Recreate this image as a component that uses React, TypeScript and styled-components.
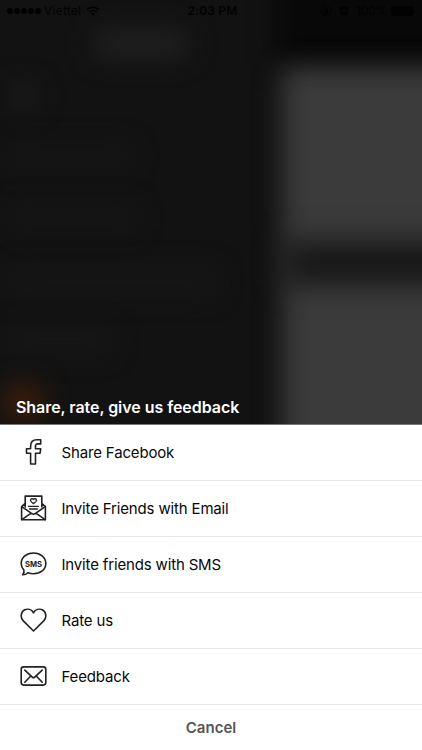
import React from "react";
import styled, { createGlobalStyle } from "styled-components";

const GlobalStyle = createGlobalStyle`
  * { box-sizing: border-box; }
  body { margin: 0; background: #121212; font-family: Inter, "Liberation Sans", sans-serif; }
  button { font-family: inherit; }
`;

const Screen = styled.main`
  position: relative;
  display: flex;
  flex-direction: column;
  width: 422px;
  height: 750px;
  overflow: hidden;
  background: #121212;
`;

const Backdrop = styled.div`
  position: absolute;
  inset: 0 0 326px;
  overflow: hidden;
`;

const Glow = styled.div<{ $x: number; $y: number; $w: number; $h: number; $color: string; $blur?: number }>`
  position: absolute;
  left: ${(p) => p.$x}px;
  top: ${(p) => p.$y}px;
  width: ${(p) => p.$w}px;
  height: ${(p) => p.$h}px;
  background: ${(p) => p.$color};
  filter: blur(${(p) => p.$blur ?? 13}px);
`;

const StatusBar = styled.header`
  position: relative;
  display: grid;
  grid-template-columns: 1fr auto 1fr;
  align-items: center;
  height: 22px;
  padding: 0 6px 0 7px;
  color: #020202;
  font-size: 12px;
  line-height: 22px;
`;

const StatusGroup = styled.div<{ $end?: boolean }>`
  display: flex;
  align-items: center;
  justify-content: ${(p) => (p.$end ? "flex-end" : "flex-start")};
`;

const Signal = styled.div`
  display: flex;
  gap: 1px;
  margin-right: 3px;
`;

const Dot = styled.span`
  width: 6px;
  height: 6px;
  border-radius: 50%;
  background: currentColor;
`;

const Carrier = styled.span`
  margin-right: 5px;
  letter-spacing: 0.25px;
`;

const Clock = styled.span`
  padding-left: 2px;
  font-weight: 600;
  letter-spacing: 0.2px;
`;

const Indicators = styled.div`
  display: flex;
  align-items: center;
  gap: 7px;
`;

const Percent = styled.span`
  margin: 0 4px 0 7px;
  letter-spacing: -0.25px;
`;

const Title = styled.h1`
  position: relative;
  margin: auto 0 0;
  padding: 0 16px;
  height: 28px;
  color: #fff;
  font-size: 16px;
  font-weight: 600;
  line-height: 23px;
  letter-spacing: -0.05px;
  white-space: nowrap;
`;

const Sheet = styled.section`
  position: relative;
  display: flex;
  flex-direction: column;
  height: 326px;
  background: #fff;
  border-top: 1px solid #777;
`;

const Action = styled.button`
  display: flex;
  align-items: center;
  height: 56px;
  padding: 0 20px;
  border: 0;
  border-bottom: 1px solid #e8e8e8;
  background: #fff;
  color: #080808;
  font-size: 15px;
  text-align: left;
`;

const Label = styled.span`
  margin-left: 14.5px;
  letter-spacing: -0.16px;
  white-space: nowrap;
`;

const Cancel = styled.button`
  flex: 1;
  padding: 0 0 1px;
  border: 0;
  background: #fff;
  color: #555;
  font-size: 15px;
  font-weight: 600;
`;

const Icon = styled.svg`
  width: 27px;
  height: 28px;
  margin-bottom: 2px;
  flex: none;
  fill: none;
  stroke: #222;
  stroke-width: 1.6;
  stroke-linecap: round;
  stroke-linejoin: round;
`;

const SmsText = styled.text`
  fill: #222;
  stroke: none;
  font: 700 7.6px Inter, sans-serif;
`;

const FacebookIcon = () => (
  <Icon viewBox="0 0 27 28">
    <path d="M10.6 26V15.2H6.5v-4.4h4.1V8.4c0-4.3 2.2-6.6 6.2-6.6h3.9v4.1h-2.9c-1.7 0-2.3.8-2.3 2.3v2.6h5.2l-.6 4.4h-4.6V26z" />
  </Icon>
);

const InviteIcon = () => (
  <Icon viewBox="0 0 27 28">
    <path d="M5.2 13V2.1h16.6V13M5.2 9.4 1.6 12.5v13.3h23.8V12.5l-3.6-3.1" />
    <path d="m1.8 12.7 9.4 6.4 2.3 1.3 2.3-1.3 9.4-6.4M1.8 25.6l9.4-6.5M25.2 25.6l-9.4-6.5" />
    <path strokeWidth="1.3" d="M13.5 9.6c-2.1-1.4-3-2.3-3-3.4 0-1.7 2.2-2 3-.6.8-1.4 3-1.1 3 .6 0 1.1-.9 2-3 3.4zM8.5 12.3h10M9.5 15h8" />
  </Icon>
);

const SmsIcon = () => (
  <Icon viewBox="0 0 27 28">
    <path d="M3.9 20.1C2.2 18.3 1.2 16 1.2 13.4 1.2 7.1 6.7 3 13.5 3s12.3 4.1 12.3 10.4-5.5 10.4-12.3 10.4c-2 0-3.9-.4-5.6-1.1-1.5 1.5-3.2 2.2-5.3 2.1 1.4-1.4 1.8-2.7 1.3-4.7z" />
    <SmsText x="13.5" y="16.5" textAnchor="middle">SMS</SmsText>
  </Icon>
);

const HeartIcon = () => (
  <Icon viewBox="0 0 27 28">
    <path d="M13.5 25 3.3 14.9C-.1 11.5.8 5.7 4.7 3.8c3.2-1.4 6.9-.3 8.8 3 1.9-3.3 5.6-4.4 8.8-3 3.9 1.9 4.8 7.7 1.4 11.1z" />
  </Icon>
);

const FeedbackIcon = () => (
  <Icon viewBox="0 0 27 28">
    <rect x="1.2" y="4.9" width="24.6" height="18.2" rx="2.5" />
    <path d="m4.8 8.1 7.5 7c.8.8 1.6.8 2.4 0l7.5-7M4.8 20.2l5.7-5.9M22.2 20.2l-5.7-5.9" />
  </Icon>
);

const WifiIcon = () => (
  <svg width="14" height="10" viewBox="0 0 14 10" fill="none" stroke="currentColor" strokeWidth="1.7">
    <path d="M1 3.7c3.4-3.1 8.6-3.1 12 0M3.3 6c2.1-1.9 5.3-1.9 7.4 0" />
    <path d="M5 7.5c1.1-1 2.9-1 4 0L7 9.7z" fill="currentColor" stroke="none" />
  </svg>
);

const LockIcon = () => (
  <svg width="12" height="12" viewBox="0 0 12 12" fill="none" stroke="currentColor">
    <path d="M10.8 4.5A5 5 0 1 0 10.8 7.5M9.4 5.2l1.6 1.6.9-2" />
    <rect x="4" y="5.4" width="4" height="3" fill="currentColor" stroke="none" />
    <path d="M4.8 5.5V4.3c0-1.4 2.4-1.4 2.4 0v1.2" strokeWidth=".8" />
  </svg>
);

const AlarmIcon = () => (
  <svg width="10" height="10" viewBox="0 0 10 10">
    <path d="M1 2.8 2.8 1M9 2.8 7.2 1M2 9l1.2-1.4M8 9 6.8 7.6" stroke="currentColor" strokeWidth="1.6" />
    <circle cx="5" cy="5.2" r="4" fill="currentColor" />
    <path d="M5 3v2.4h1.7" fill="none" stroke="#151515" strokeWidth=".7" />
  </svg>
);

const BatteryIcon = () => (
  <svg width="25" height="10" viewBox="0 0 25 10" fill="currentColor">
    <rect width="22.5" height="10" rx="2" />
    <path d="M23.3 3.2c2 .5 2 3.1 0 3.6z" />
  </svg>
);

const actions = [
  { label: "Share Facebook", icon: FacebookIcon },
  { label: "Invite Friends with Email", icon: InviteIcon },
  { label: "Invite friends with SMS", icon: SmsIcon },
  { label: "Rate us", icon: HeartIcon },
  { label: "Feedback", icon: FeedbackIcon },
];

export default function App() {
  return (
    <>
      <GlobalStyle />
      <Screen>
        <Backdrop>
          <Glow $x={277} $y={-30} $w={190} $h={97} $color="#080808" />
          <Glow $x={282} $y={68} $w={190} $h={400} $color="#3b3b3b" />
          <Glow $x={284} $y={242} $w={190} $h={42} $color="#151515" $blur={15} />
          <Glow $x={95} $y={30} $w={92} $h={28} $color="#212121" />
          <Glow $x={10} $y={86} $w={26} $h={22} $color="#1e1e1e" />
          <Glow $x={10} $y={146} $w={120} $h={22} $color="#161616" />
          <Glow $x={10} $y={207} $w={125} $h={22} $color="#161616" />
          <Glow $x={10} $y={270} $w={205} $h={24} $color="#171717" />
          <Glow $x={10} $y={330} $w={100} $h={22} $color="#181818" />
          <Glow $x={4} $y={384} $w={38} $h={36} $color="#3c1d0b" />
        </Backdrop>
        <StatusBar>
          <StatusGroup>
            <Signal>{[0, 1, 2, 3, 4].map((n) => <Dot key={n} />)}</Signal>
            <Carrier>Viettel</Carrier>
            <WifiIcon />
          </StatusGroup>
          <Clock>2:03 PM</Clock>
          <StatusGroup $end>
            <Indicators>
              <LockIcon />
              <AlarmIcon />
            </Indicators>
            <Percent>100%</Percent>
            <BatteryIcon />
          </StatusGroup>
        </StatusBar>
        <Title>Share, rate, give us feedback</Title>
        <Sheet>
          {actions.map(({ label, icon: ActionIcon }) => (
            <Action key={label} type="button">
              <ActionIcon />
              <Label>{label}</Label>
            </Action>
          ))}
          <Cancel type="button">Cancel</Cancel>
        </Sheet>
      </Screen>
    </>
  );
}
